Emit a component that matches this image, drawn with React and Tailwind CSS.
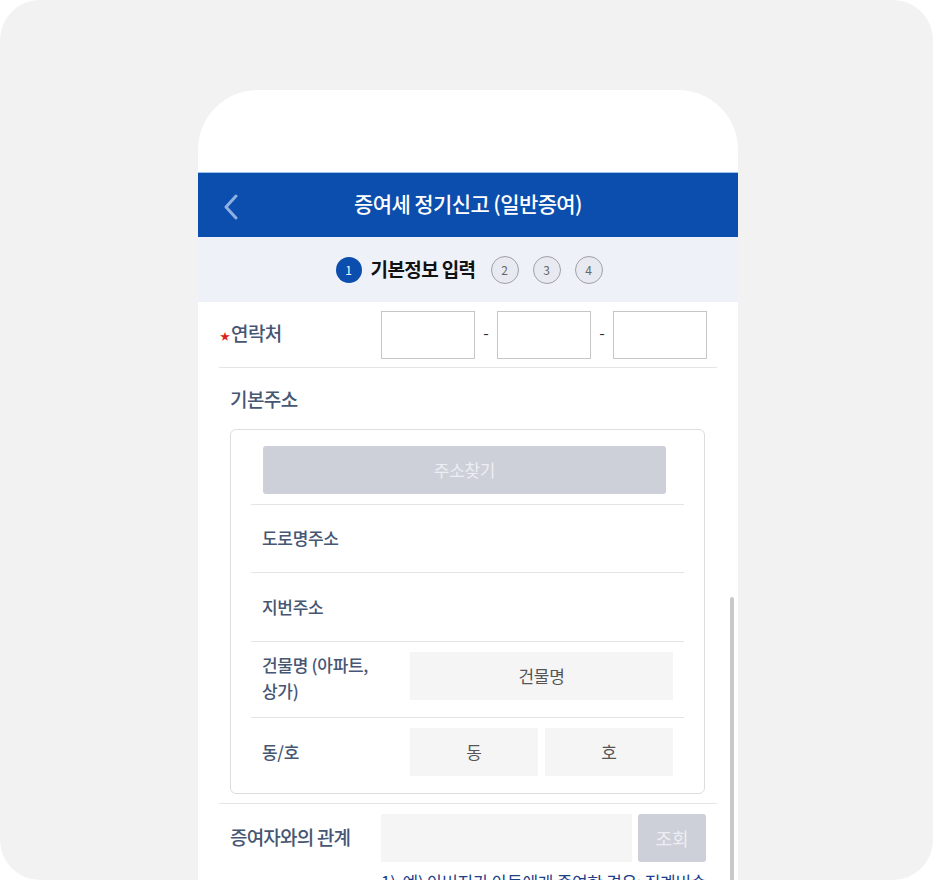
export default function App() {
  const font = { fontFamily: '"Noto Sans CJK KR", "Noto Sans", sans-serif' };
  return (
    <div className="w-[933px] h-[882px] bg-white" style={font}>
      <div className="w-[933px] h-[880px] bg-[#f2f2f2] rounded-[40px] overflow-hidden pt-[90px] pl-[198px]">
        <div className="relative w-[540px] h-[790px] bg-white rounded-t-[60px] overflow-hidden">
          <div className="h-[82px]" />
          {/* header */}
          <div className="h-[65px] bg-[#0c4ead] border-t border-[#9cc2f0] flex items-center relative">
            <svg className="absolute left-[24px] top-[21px]" width="18" height="26" viewBox="0 0 18 26">
              <polyline points="14,2 4,13 14,24" fill="none" stroke="#8fb0e4" strokeWidth="3" strokeLinecap="round" strokeLinejoin="round" />
            </svg>
            <div className="w-full text-center text-white text-[21px] font-medium tracking-[-0.6px] leading-none pb-[3px]">
              증여세 정기신고 (일반증여)
            </div>
          </div>
          {/* stepper */}
          <div className="h-[65px] bg-[#eff1f9] flex items-center justify-center pl-[2px]">
            <div className="w-[26px] h-[26px] rounded-full bg-[#0c4ead] text-white text-[12px] flex items-center justify-center leading-none">1</div>
            <div className="ml-[9px] text-[19px] font-bold text-[#111] tracking-[-0.6px] leading-none pb-[3px]">기본정보 입력</div>
            <div className="ml-[15px] w-[28px] h-[28px] rounded-full border border-[#a0a0a6] bg-[#e8eaf1] text-[#666] text-[12px] flex items-center justify-center leading-none">2</div>
            <div className="ml-[14px] w-[28px] h-[28px] rounded-full border border-[#a0a0a6] bg-[#e8eaf1] text-[#666] text-[12px] flex items-center justify-center leading-none">3</div>
            <div className="ml-[14px] w-[28px] h-[28px] rounded-full border border-[#a0a0a6] bg-[#e8eaf1] text-[#666] text-[12px] flex items-center justify-center leading-none">4</div>
          </div>
          {/* content */}
          <div className="mx-[21px]">
            {/* 연락처 */}
            <div className="h-[66px] border-b border-[#e3e4e8] flex items-center">
              <div className="w-[162px] flex items-center">
                <span className="text-[#e02020] text-[10px] leading-none mt-[2px] ml-[1px]">★</span>
                <span className="ml-[1px] text-[19px] font-medium text-[#465673] tracking-[-0.6px] leading-none pb-[4px]">연락처</span>
              </div>
              <div className="flex items-center">
                <div className="w-[94px] h-[48px] border border-[#c6c6c9] bg-white" />
                <div className="w-[22px] text-center text-[16px] text-[#333] leading-none pb-[6px]">-</div>
                <div className="w-[94px] h-[48px] border border-[#c6c6c9] bg-white" />
                <div className="w-[22px] text-center text-[16px] text-[#333] leading-none pb-[6px]">-</div>
                <div className="w-[94px] h-[48px] border border-[#c6c6c9] bg-white" />
              </div>
            </div>
            {/* 기본주소 */}
            <div className="pl-[11px] pr-[12px]">
              <div className="h-[61px] flex items-center text-[19px] font-medium text-[#465673] tracking-[-0.6px] leading-none">기본주소</div>
              <div className="border border-[#dcdde1] rounded-[6px] px-[20px] pt-[16px]">
                <div className="pl-[12px] pr-[18px] pb-[10px] border-b border-[#e3e4e8]">
                  <div className="h-[48px] bg-[#cdd0d8] rounded-[3px] flex items-center justify-center text-[17px] text-[#eceef3] tracking-[-0.3px]">주소찾기</div>
                </div>
                <div className="h-[68px] border-b border-[#e3e4e8] flex items-center pl-[11px] text-[17px] font-medium text-[#465673] tracking-[-0.3px] leading-none pb-[2px]">도로명주소</div>
                <div className="h-[69px] border-b border-[#e3e4e8] flex items-center pl-[11px] text-[17px] font-medium text-[#465673] tracking-[-0.3px] leading-none pb-[2px]">지번주소</div>
                <div className="h-[76px] border-b border-[#e3e4e8] flex items-start pt-[10px] pl-[11px] pr-[11px]">
                  <div className="w-[148px] text-[17px] font-medium text-[#465673] tracking-[-0.3px] leading-[26px]">건물명 (아파트,<br />상가)</div>
                  <div className="flex-1 h-[48px] bg-[#f5f5f5] flex items-center justify-center text-[17px] text-[#555] tracking-[-0.3px]">건물명</div>
                </div>
                <div className="h-[75px] flex items-start pt-[10px] pl-[11px] pr-[11px]">
                  <div className="w-[148px] h-[48px] flex items-center text-[17px] font-medium text-[#465673] tracking-[-0.3px] leading-none pb-[2px]">동/호</div>
                  <div className="flex-1 flex gap-[7px]">
                    <div className="flex-1 h-[48px] bg-[#f5f5f5] flex items-center justify-center text-[17px] text-[#555]">동</div>
                    <div className="flex-1 h-[48px] bg-[#f5f5f5] flex items-center justify-center text-[17px] text-[#555]">호</div>
                  </div>
                </div>
              </div>
            </div>
            {/* 증여자와의 관계 */}
            <div className="mt-[9px] border-t border-[#e3e4e8] pt-[10px] flex items-center">
              <div className="w-[162px] pl-[11px] text-[19px] font-medium text-[#465673] tracking-[-0.8px] leading-none pb-[4px] whitespace-nowrap">증여자와의 관계</div>
              <div className="w-[251px] h-[48px] bg-[#f5f5f5]" />
              <div className="ml-[6px] w-[68px] h-[48px] bg-[#cdd0d8] rounded-[3px] flex items-center justify-center text-[18px] text-[#eceef3]">조회</div>
            </div>
            <div className="pl-[162px] mt-[8px] text-[17px] text-[#1d3f88] tracking-[-0.3px] leading-[24px] whitespace-nowrap">
              1)&nbsp;&nbsp;예) 아버지가 아들에게 증여한 경우: 직계비속
            </div>
          </div>
          {/* scrollbar */}
          <div className="absolute right-[4px] top-[507px] w-[4px] h-[300px] bg-[#c9c9c9] rounded-full" />
        </div>
      </div>
    </div>
  );
}
